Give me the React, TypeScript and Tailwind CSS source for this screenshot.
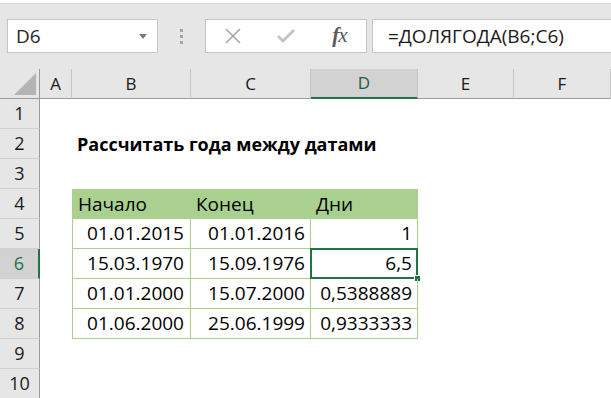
import React from 'react';

const COLS = ['A', 'B', 'C', 'D', 'E', 'F'];

const rows: { b: string; c: string; d: string }[] = [
  { b: '01.01.2015', c: '01.01.2016', d: '1' },
  { b: '15.03.1970', c: '15.09.1976', d: '6,5' },
  { b: '01.01.2000', c: '15.07.2000', d: '0,5388889' },
  { b: '01.06.2000', c: '25.06.1999', d: '0,9333333' },
];

const FormulaBar = () => (
  <div className="h-[66px] bg-[#e6e6e6] border-t border-[#d6d6d6] mt-[3px] flex items-start pt-[15px]">
    {/* Name box */}
    <div className="ml-[7px] w-[151px] h-[34px] bg-white border border-[#c6c6c6] flex items-center justify-between pl-[8px] pr-[10px]">
      <span className="text-[19px] text-[#262626]">D6</span>
      <svg width="8" height="5" viewBox="0 0 8 5">
        <path d="M0 0 L8 0 L4 5 Z" fill="#7a7a7a" />
      </svg>
    </div>
    {/* Dots */}
    <div className="w-[47px] h-[34px] flex flex-col items-center justify-center gap-[3px]">
      <span className="w-[3px] h-[3px] bg-[#a6a6a6]" />
      <span className="w-[3px] h-[3px] bg-[#a6a6a6]" />
      <span className="w-[3px] h-[3px] bg-[#a6a6a6]" />
    </div>
    {/* Buttons */}
    <div className="w-[162px] h-[34px] bg-white border border-[#c6c6c6] flex items-center">
      <div className="w-[54px] flex justify-center">
        <svg width="18" height="18" viewBox="0 0 18 18">
          <path d="M2 2 L16 16 M16 2 L2 16" stroke="#a6a6a6" strokeWidth="1.6" />
        </svg>
      </div>
      <div className="w-[54px] flex justify-center">
        <svg width="20" height="16" viewBox="0 0 20 16">
          <path d="M2 8 L7 13 L18 2" stroke="#c4c4c4" strokeWidth="3" fill="none" />
        </svg>
      </div>
      <div className="w-[54px] flex justify-center">
        <span className="text-[21px] italic text-[#595959] font-['Liberation_Serif',serif] tracking-[-1px]">
          <span className="font-bold">f</span>x
        </span>
      </div>
    </div>
    {/* Formula */}
    <div className="ml-[5px] flex-1 h-[34px] bg-white border border-[#c6c6c6] border-r-0 flex items-center pl-[15px]">
      <span className="text-[19px] text-[#1a1a1a]">=ДОЛЯГОДА(B6;C6)</span>
    </div>
  </div>
);

const HeaderRow = () => (
  <>
    <div className="bg-[#e6e6e6] border-r border-b border-[#9b9b9b] relative flex items-end justify-end pr-[3px] pb-[3px]">
      <svg width="22" height="22" viewBox="0 0 22 22">
        <path d="M22 0 L22 22 L0 22 Z" fill="#b4b4b4" />
      </svg>
    </div>
    {COLS.map((c) => (
      <div
        key={c}
        className={`flex items-center justify-center text-[17px] border-r border-[#c6c6c6] ${
          c === 'D'
            ? 'bg-[#d2d2d2] text-[#285b3b] border-b-2 border-b-[#217346]'
            : 'bg-[#e6e6e6] text-[#1a1a1a] border-b border-b-[#9b9b9b]'
        }`}
      >
        {c}
      </div>
    ))}
  </>
);

const RowHead = ({ n }: { n: number }) => (
  <div
    className={`flex items-center justify-center text-[18px] border-b border-[#d0d0d0] ${
      n === 6
        ? 'bg-[#d2d2d2] text-[#217346] border-r-2 border-r-[#217346]'
        : 'bg-[#e6e6e6] text-[#1a1a1a] border-r border-r-[#9b9b9b]'
    }`}
  >
    {n}
  </div>
);

const Cell = ({
  children,
  className = '',
  title = false,
}: {
  children?: React.ReactNode;
  className?: string;
  title?: boolean;
}) => (
  <div
    className={`flex items-center text-black whitespace-nowrap ${
      title ? 'text-[18px] font-bold' : 'text-[19px]'
    } ${className}`}
  >
    {children}
  </div>
);

export default function App() {
  return (
    <div className="w-[611px] h-[398px] overflow-hidden bg-white font-['Open_Sans',sans-serif]">
      <FormulaBar />
      <div className="grid grid-cols-[40px_32px_119px_120px_107px_96px_1fr] grid-rows-[30px_repeat(10,30px)]">
        <HeaderRow />
        {Array.from({ length: 10 }, (_, i) => {
          const n = i + 1;
          const cells: React.ReactNode[] = [<RowHead key="h" n={n} />, <Cell key="a" />];
          if (n === 2) {
            cells.push(
              <Cell key="b" title className="pl-[5px] overflow-visible z-10">
                Рассчитать года между датами
              </Cell>,
              <Cell key="c" />,
              <Cell key="d" />
            );
          } else if (n === 4) {
            cells.push(
              <Cell key="b" className="bg-[#a9d08e] pl-[5px] border-l border-[#a9d08e]">Начало</Cell>,
              <Cell key="c" className="bg-[#a9d08e] pl-[5px]">Конец</Cell>,
              <Cell key="d" className="bg-[#a9d08e] pl-[5px] border-r border-[#a9d08e]">Дни</Cell>
            );
          } else if (n >= 5 && n <= 8) {
            const r = rows[n - 5];
            cells.push(
              <Cell key="b" className="justify-end pr-[6px] border-l border-r border-b border-[#a9d08e]">{r.b}</Cell>,
              <Cell key="c" className="justify-end pr-[5px] border-r border-b border-[#a9d08e]">{r.c}</Cell>,
              <Cell key="d" className="justify-end pr-[5px] border-r border-b border-[#a9d08e] relative">
                {r.d}
                {n === 6 && (
                  <>
                    <span className="absolute -left-px -top-px -right-px -bottom-px border-2 border-[#217346]" />
                    <span className="absolute -right-[4px] -bottom-[4px] w-[7px] h-[7px] bg-[#217346] border border-white" />
                  </>
                )}
              </Cell>
            );
          } else {
            cells.push(<Cell key="b" />, <Cell key="c" />, <Cell key="d" />);
          }
          cells.push(<Cell key="e" />, <Cell key="f" />);
          return <React.Fragment key={n}>{cells}</React.Fragment>;
        })}
      </div>
    </div>
  );
}
